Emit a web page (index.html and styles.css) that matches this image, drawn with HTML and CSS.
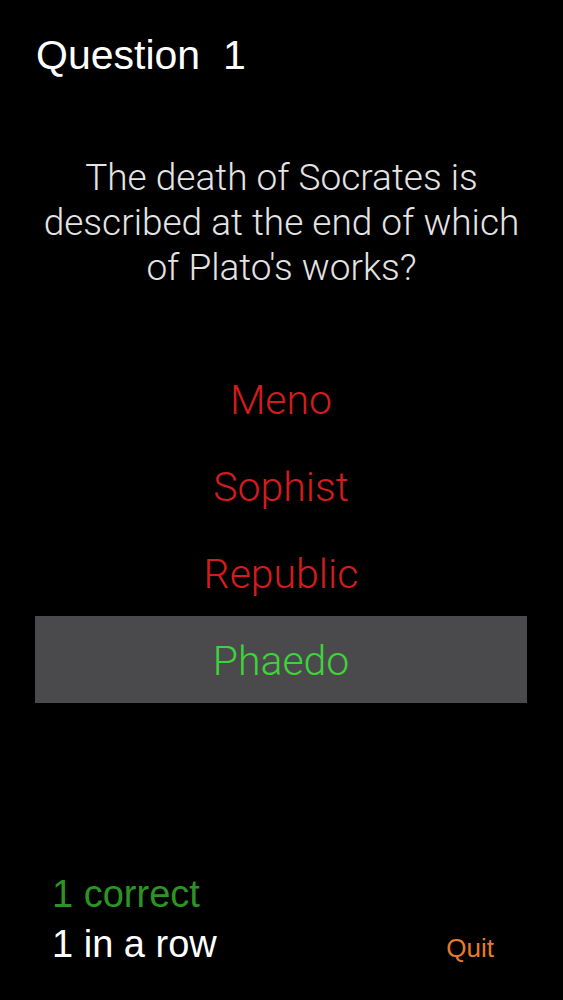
FILE: index.html
```html
<!DOCTYPE html>
<html lang="en">
<head>
<meta charset="utf-8">
<title>Question 1</title>
<link rel="stylesheet" href="styles.css">
</head>
<body>
<main class="screen">
  <header class="header">
    <h1 class="title">Question&nbsp; 1</h1>
  </header>
  <p class="question">The death of Socrates is<br>described at the end of which<br>of Plato's works?</p>
  <ul class="answers">
    <li class="answer wrong">Meno</li>
    <li class="answer wrong">Sophist</li>
    <li class="answer wrong">Republic</li>
    <li class="answer right">Phaedo</li>
  </ul>
  <footer class="footer">
    <div class="correct">1 correct</div>
    <div class="footer-row">
      <span class="streak">1 in a row</span>
      <span class="quit">Quit</span>
    </div>
  </footer>
</main>
</body>
</html>
```

FILE: styles.css
```css
html, body {
  margin: 0;
  padding: 0;
  background: #000;
}

.screen {
  width: 563px;
  height: 1000px;
  display: flex;
  flex-direction: column;
  background: #000;
  font-family: "Liberation Sans", Arial, sans-serif;
}

.header {
  padding: 31px 0 0 36px;
}

.title {
  margin: 0;
  font-size: 41px;
  line-height: 48px;
  font-weight: 400;
  color: #fff;
}

.question {
  margin: 76px 0 0;
  text-align: center;
  font-family: "Roboto", "Liberation Sans", sans-serif;
  font-weight: 300;
  font-size: 37px;
  line-height: 45px;
  color: #e4e4e4;
}

.answers {
  list-style: none;
  margin: 65px 0 0;
  padding: 0;
}

.answer {
  height: 84px;
  padding-top: 3px;
  margin: 0 36px 0 35px;
  text-align: center;
  font-family: "Roboto", "Liberation Sans", sans-serif;
  font-weight: 300;
  font-size: 41px;
  line-height: 84px;
}

.wrong {
  color: #d41c1c;
}

.right {
  color: #40d23b;
  background: #4a4a4c;
}

.footer {
  margin-top: auto;
  padding: 0 69px 31px 52px;
}

.correct {
  font-size: 38px;
  line-height: 50px;
  color: #2b9424;
}

.footer-row {
  display: flex;
  justify-content: space-between;
  align-items: baseline;
}

.streak {
  font-size: 38px;
  line-height: 50px;
  color: #fff;
}

.quit {
  font-size: 26px;
  color: #e57a2c;
}
```
